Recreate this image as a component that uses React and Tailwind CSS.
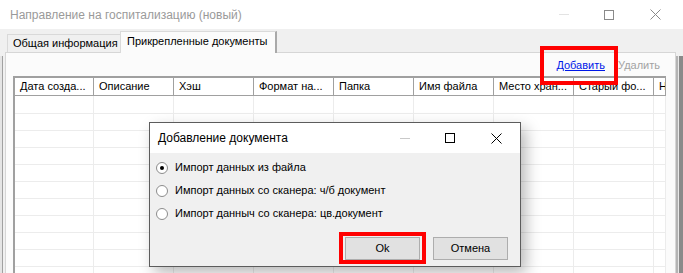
const columns = [
  { title: "Дата созда...", w: "w-[79px]" },
  { title: "Описание", w: "w-[80px]" },
  { title: "Хэш", w: "w-[80px]" },
  { title: "Формат на...", w: "w-[80px]" },
  { title: "Папка", w: "w-[80px]" },
  { title: "Имя файла", w: "w-[80px]" },
  { title: "Место хран...", w: "w-[80px]" },
  { title: "Старый фо...", w: "w-[80px]" },
  { title: "Н", w: "w-[12px]" },
];

const options = [
  { label: "Импорт данных из файла", checked: true },
  { label: "Импорт данных со сканера: ч/б документ", checked: false },
  { label: "Импорт данныч со сканера: цв.документ", checked: false },
];

function TitleButtons({ dim }) {
  const stroke = dim ? "#8a8a8a" : "#000";
  return (
    <div className="flex items-center">
      <div className={`h-px w-[10px] ${dim ? "bg-[#e3e3e3]" : "bg-[#c9c9c9]"}`} />
      <div className="ml-[35px] h-[10px] w-[10px] border" style={{ borderColor: stroke }} />
      <svg className="ml-[36px]" width="11" height="11" viewBox="0 0 11 11">
        <path d="M0.5 0.5 L10.5 10.5 M10.5 0.5 L0.5 10.5" stroke={stroke} strokeWidth="1" fill="none" />
      </svg>
    </div>
  );
}

function Grid() {
  return (
    <div className="flex w-[653px] flex-col border-l-2 border-t-2 border-[#a0a0a0] bg-white">
      <div className="flex h-[18px] border-b border-[#a0a0a0]">
        {columns.map((c) => (
          <div
            key={c.title}
            className={`${c.w} shrink-0 overflow-hidden whitespace-nowrap border-r border-[#a0a0a0] pl-[5px] text-[11px] leading-[17px] text-black`}
          >
            {c.title}
          </div>
        ))}
      </div>
      {Array.from({ length: 11 }).map((_, i) => (
        <div key={i} className={`flex ${i === 0 ? "h-[18px]" : "h-[17px]"} border-b border-[#ececec]`}>
          {columns.map((c) => (
            <div key={c.title} className={`${c.w} shrink-0 border-r border-[#ececec]`} />
          ))}
        </div>
      ))}
    </div>
  );
}

function Dialog() {
  return (
    <div className="absolute left-[149px] top-[122px] flex h-[145px] w-[372px] flex-col border border-[#5c5c5c] bg-[#f0f0f0] shadow-[5px_6px_14px_rgba(0,0,0,0.28)]">
      <div className="flex h-[30px] items-center justify-between bg-white pl-[8px] pr-[18px]">
        <span className="text-[12px] text-black">Добавление документа</span>
        <TitleButtons />
      </div>
      <div className="flex flex-col pl-[6px] pt-[3px]">
        {options.map((o) => (
          <label key={o.label} className="flex h-[23px] items-center">
            <span className="flex h-[12px] w-[12px] items-center justify-center rounded-full border border-[#8c8c8c] bg-white">
              {o.checked && <span className="h-[4px] w-[4px] rounded-full bg-black" />}
            </span>
            <span className="ml-[7px] whitespace-nowrap text-[11px] text-black">{o.label}</span>
          </label>
        ))}
      </div>
      <div className="mt-[12px] flex justify-end gap-[13px] pr-[12px]">
        <button className="h-[23px] w-[75px] border border-[#adadad] bg-[#e1e1e1] text-[11px] text-black">Ok</button>
        <button className="h-[23px] w-[75px] border border-[#adadad] bg-[#e1e1e1] text-[11px] text-black">Отмена</button>
      </div>
    </div>
  );
}

export default function App() {
  return (
    <div className="relative h-[273px] w-[683px] overflow-hidden bg-[#f0f0f0] font-['Liberation_Sans',Arial,sans-serif]">
      <div className="flex h-[29px] items-center justify-between bg-white pl-[10px] pr-[22px]">
        <span className="text-[12px] text-[#9a9a9a]">Направление на госпитализацию (новый)</span>
        <TitleButtons dim />
      </div>

      <div className="flex h-[244px]">
        <div className="mt-[27px] w-[3px] shrink-0 border-r border-[#a0a0a0] bg-[#e4e4e4]" />
        <div className="flex flex-1 flex-col pl-[2px] pt-[2px]">
          <div className="flex h-[21px] items-end pl-[2px]">
            <div className="h-[18px] w-[113px] shrink-0 whitespace-nowrap border-l border-t border-[#d9d9d9] bg-[#f0f0f0] pl-[5px] text-[11px] leading-[17px] text-black">
              Общая информация
            </div>
            <div className="relative z-10 -mb-px h-[22px] w-[157px] shrink-0 whitespace-nowrap border-l border-r-2 border-t border-l-[#dadada] border-r-[#a9a9a9] border-t-[#dadada] bg-[#fbfbfb] pl-[6px] text-[11px] leading-[19px] text-black">
              Прикрепленные документы
            </div>
          </div>
          <div className="flex flex-1 flex-col border-l border-r border-t border-[#d6d6d6] bg-[#fbfbfb] pl-[7px]">
            <div className="flex h-[23px] items-center justify-end gap-[13px] pr-[15px] pt-[2px] text-[11px]">
              <span className="text-[#0018e8] underline">Добавить</span>
              <span className="text-[#a3a3a3]">Удалить</span>
            </div>
            <Grid />
          </div>
        </div>
        <div className="mt-[27px] flex w-[7px] shrink-0">
          <div className="w-[2px] bg-[#b4b4b4]" />
          <div className="w-px bg-[#e8e8e8]" />
          <div className="flex-1 bg-[#8a8a8a]" />
        </div>
      </div>

      <Dialog />

      <div className="pointer-events-none absolute left-[540px] top-[46px] h-[39px] w-[78px] border-4 border-[#ff0000]" />
      <div className="pointer-events-none absolute left-[339px] top-[232px] h-[32px] w-[87px] border-4 border-[#ff0000]" />
    </div>
  );
}
